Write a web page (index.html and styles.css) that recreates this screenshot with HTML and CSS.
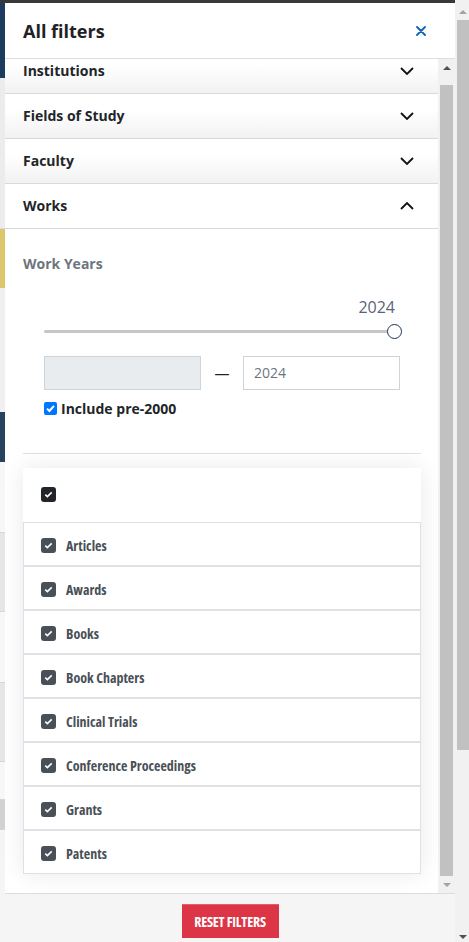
FILE: index.html
```html
<!DOCTYPE html>
<html lang="en">
<head>
<meta charset="utf-8">
<title>All filters</title>
<link rel="stylesheet" href="styles.css">
</head>
<body>
<div class="page">
  <div class="pg-top"></div>
  <div class="pg-hero"></div>
  <div class="pg-band"></div>
  <div class="pg-gold"></div>
  <div class="pg-light"></div>
  <div class="pg-navy"></div>
  <div class="pg-row"></div>
  <div class="pg-row alt"></div>
  <div class="pg-row"></div>
  <div class="pg-row alt"></div>
  <div class="pg-row short"></div>
  <div class="pg-row dark"></div>
  <div class="pg-rest"></div>
</div>

<aside class="drawer">
  <header class="drawer-head">
    <h2 class="drawer-title">All filters</h2>
    <button class="close-btn" aria-label="Close">
      <svg width="10" height="10" viewBox="0 0 10 10"><path d="M1 1L9 9M9 1L1 9" stroke="#0b63b6" stroke-width="1.8" stroke-linecap="round"/></svg>
    </button>
  </header>

  <div class="drawer-body">
    <div class="scroll-area">
      <div class="scroll-content">
        <div class="acc-row"><span>Institutions</span><svg class="chev" width="14" height="8" viewBox="0 0 14 8"><path d="M1 1L7 7L13 1" fill="none" stroke="#111" stroke-width="1.8"/></svg></div>
        <div class="acc-row"><span>Fields of Study</span><svg class="chev" width="14" height="8" viewBox="0 0 14 8"><path d="M1 1L7 7L13 1" fill="none" stroke="#111" stroke-width="1.8"/></svg></div>
        <div class="acc-row"><span>Faculty</span><svg class="chev" width="14" height="8" viewBox="0 0 14 8"><path d="M1 1L7 7L13 1" fill="none" stroke="#111" stroke-width="1.8"/></svg></div>
        <div class="acc-row open"><span>Works</span><svg class="chev" width="14" height="8" viewBox="0 0 14 8"><path d="M1 7L7 1L13 7" fill="none" stroke="#111" stroke-width="1.8"/></svg></div>

        <div class="works-body">
          <div class="sub-title">Work Years</div>
          <div class="range">
            <div class="range-value">2024</div>
            <div class="slider">
              <div class="slider-track"></div>
              <div class="slider-thumb"></div>
            </div>
            <div class="range-inputs">
              <div class="year-input disabled"></div>
              <span class="dash">—</span>
              <div class="year-input">2024</div>
            </div>
            <label class="pre-row">
              <svg width="13" height="13" viewBox="0 0 13 13"><rect width="13" height="13" rx="2" fill="#0075ff"/><path d="M3 6.6L5.4 9L10 3.8" fill="none" stroke="#fff" stroke-width="2"/></svg>
              <span>Include pre-2000</span>
            </label>
          </div>
          <hr class="sep">
          <div class="type-card">
            <div class="type-head">
              <svg width="15" height="15" viewBox="0 0 15 15"><rect width="15" height="15" rx="3" fill="#212529"/><path d="M4.3 7.6L6.4 9.6L10.7 5.4" fill="none" stroke="#fff" stroke-width="1.6"/></svg>
            </div>
            <div class="type-item"><svg width="15" height="15" viewBox="0 0 15 15"><rect width="15" height="15" rx="3" fill="#495057"/><path d="M4.3 7.6L6.4 9.6L10.7 5.4" fill="none" stroke="#fff" stroke-width="1.6"/></svg><span>Articles</span></div>
            <div class="type-item"><svg width="15" height="15" viewBox="0 0 15 15"><rect width="15" height="15" rx="3" fill="#495057"/><path d="M4.3 7.6L6.4 9.6L10.7 5.4" fill="none" stroke="#fff" stroke-width="1.6"/></svg><span>Awards</span></div>
            <div class="type-item"><svg width="15" height="15" viewBox="0 0 15 15"><rect width="15" height="15" rx="3" fill="#495057"/><path d="M4.3 7.6L6.4 9.6L10.7 5.4" fill="none" stroke="#fff" stroke-width="1.6"/></svg><span>Books</span></div>
            <div class="type-item"><svg width="15" height="15" viewBox="0 0 15 15"><rect width="15" height="15" rx="3" fill="#495057"/><path d="M4.3 7.6L6.4 9.6L10.7 5.4" fill="none" stroke="#fff" stroke-width="1.6"/></svg><span>Book Chapters</span></div>
            <div class="type-item"><svg width="15" height="15" viewBox="0 0 15 15"><rect width="15" height="15" rx="3" fill="#495057"/><path d="M4.3 7.6L6.4 9.6L10.7 5.4" fill="none" stroke="#fff" stroke-width="1.6"/></svg><span>Clinical Trials</span></div>
            <div class="type-item"><svg width="15" height="15" viewBox="0 0 15 15"><rect width="15" height="15" rx="3" fill="#495057"/><path d="M4.3 7.6L6.4 9.6L10.7 5.4" fill="none" stroke="#fff" stroke-width="1.6"/></svg><span>Conference Proceedings</span></div>
            <div class="type-item"><svg width="15" height="15" viewBox="0 0 15 15"><rect width="15" height="15" rx="3" fill="#495057"/><path d="M4.3 7.6L6.4 9.6L10.7 5.4" fill="none" stroke="#fff" stroke-width="1.6"/></svg><span>Grants</span></div>
            <div class="type-item"><svg width="15" height="15" viewBox="0 0 15 15"><rect width="15" height="15" rx="3" fill="#495057"/><path d="M4.3 7.6L6.4 9.6L10.7 5.4" fill="none" stroke="#fff" stroke-width="1.6"/></svg><span>Patents</span></div>
          </div>
        </div>
      </div>
    </div>
    <div class="inner-scrollbar">
      <div class="sb-btn"><span class="tri-up dark"></span></div>
      <div class="sb-thumb inner"></div>
      <div class="sb-btn bottom"><span class="tri-down light"></span></div>
    </div>
  </div>

  <footer class="drawer-foot">
    <button class="reset-btn">RESET FILTERS</button>
  </footer>
</aside>

<div class="outer-scrollbar">
  <div class="osb-up"><span class="tri-up light"></span></div>
  <div class="sb-thumb outer"></div>
  <div class="osb-fill"></div>
  <div class="osb-down"><span class="tri-down dark"></span></div>
</div>
</body>
</html>
```

FILE: styles.css
```css
* { box-sizing: border-box; margin: 0; padding: 0; }
html, body { height: 100%; }
body {
  overflow: hidden;
  background: #f3f3f3;
  font-family: "Open Sans", "Liberation Sans", sans-serif;
  color: #212529;
}

/* background page strip */
.page { width: 455px; }
.pg-top { height: 3px; background: #383838; }
.pg-hero { height: 75px; background: #1d3b5e; }
.pg-band { height: 151px; background: #ececec; border-bottom: 1px solid #dcdcdc; }
.pg-gold { height: 59px; background: #dbc66c; }
.pg-light { height: 124px; background: #f0f0f0; }
.pg-navy { height: 50px; background: #27425f; }
.pg-row { height: 71px; background: #f7f7f7; border-bottom: 1px solid #d6d6d6; }
.pg-row.alt { height: 79px; background: #e6e6e6; }
.pg-row.short { height: 38px; }
.pg-row.dark { height: 30px; background: #d2d2d2; }
.pg-rest { height: 300px; background: #f5f5f5; }

/* drawer */
.drawer {
  position: fixed;
  left: 5px;
  top: 3px;
  bottom: 0;
  width: 450px;
  background: #fff;
  display: flex;
  flex-direction: column;
}
.drawer-head {
  flex: none;
  height: 56px;
  border-bottom: 1px solid #dedede;
  display: flex;
  align-items: center;
  justify-content: space-between;
  padding: 0 29px 0 18px;
}
.drawer-title {
  font-size: 18px;
  font-weight: 700;
  color: #1e2125;
  line-height: 24px;
}
.close-btn {
  background: none;
  border: 0;
  width: 10px;
  height: 10px;
  display: flex;
}

.drawer-body {
  flex: 1;
  min-height: 0;
  display: flex;
}
.scroll-area {
  flex: 1;
  overflow: hidden;
}
.scroll-content { margin-top: -10px; }

.acc-row {
  height: 45px;
  border-bottom: 1px solid #d9d9d9;
  background: linear-gradient(#fff 35%, #f2f2f2);
  display: flex;
  align-items: center;
  justify-content: space-between;
  padding: 0 24px 2px 18px;
  font-size: 14px;
  font-weight: 700;
  color: #212529;
}
.acc-row .chev { margin-top: 2px; }
.acc-row.open { background: #fff; }

.works-body { padding: 24px 17px 30px 18px; }
.sub-title {
  font-size: 14px;
  font-weight: 700;
  line-height: 22px;
  color: #6c757d;
}
.range { margin: 0 21px; }
.range-value {
  margin-top: 21px;
  line-height: 22px;
  font-size: 16px;
  color: #5a6478;
  text-align: right;
  padding-right: 5px;
}
.slider {
  position: relative;
  height: 16px;
  margin: 5px 5px 0 0;
  display: flex;
  align-items: center;
}
.slider-track {
  width: 100%;
  height: 3px;
  background: #c9c5c5;
  border-radius: 2px;
}
.slider-thumb {
  position: absolute;
  right: -7px;
  top: 1px;
  width: 15px;
  height: 15px;
  border-radius: 50%;
  background: #fff;
  border: 1.5px solid #1c3454;
}
.range-inputs {
  margin-top: 17px;
  display: flex;
  align-items: center;
}
.year-input {
  width: 157px;
  height: 34px;
  border: 1px solid #ced4da;
  background: #fff;
  font-size: 14px;
  color: #6c757d;
  line-height: 32px;
  padding-left: 10px;
}
.year-input.disabled { background: #e9ecef; }
.dash {
  flex: 1;
  text-align: center;
  font-size: 15px;
  color: #212529;
}
.pre-row {
  margin-top: 8px;
  display: flex;
  align-items: center;
  gap: 4px;
  height: 20px;
  font-size: 14px;
  font-weight: 700;
  color: #212529;
}

.sep {
  border: 0;
  border-top: 1px solid #dee2e6;
  margin-top: 35px;
}

.type-card {
  margin-top: 14px;
  background: #fff;
  box-shadow: 0 0 22px rgba(0, 0, 0, 0.09);
}
.type-head {
  height: 54px;
  padding: 19px 0 0 18px;
  display: flex;
  align-items: flex-start;
}
.type-item {
  height: 44px;
  border: 1px solid #dee2e6;
  display: flex;
  align-items: center;
  gap: 10px;
  padding: 2px 0 0 17px;
  font-size: 14px;
  font-weight: 700;
  font-stretch: 75%;
  color: #495057;
}
.type-item svg, .type-head svg { flex: none; }

/* scrollbars */
.inner-scrollbar {
  flex: none;
  width: 17px;
  background: #f1f1f1;
  display: flex;
  flex-direction: column;
}
.sb-btn {
  height: 17px;
  display: flex;
  align-items: center;
  justify-content: center;
}
.sb-thumb { background: #c1c1c1; }
.sb-thumb.inner { height: 791px; margin: 9px 2px 0 2px; }
.outer-scrollbar {
  position: fixed;
  top: 0;
  right: 0;
  width: 14px;
  height: 942px;
  background: #f1f1f1;
  display: flex;
  flex-direction: column;
}
.osb-up {
  height: 20px;
  display: flex;
  align-items: center;
  justify-content: center;
  padding: 3px 0 0 1px;
}
.sb-thumb.outer { height: 730px; margin-left: 2px; }
.osb-fill { flex: 1; }
.osb-down {
  height: 10px;
  display: flex;
  align-items: center;
  justify-content: center;
  padding-left: 1px;
}
.tri-up, .tri-down {
  width: 0;
  height: 0;
  border-left: 4px solid transparent;
  border-right: 4px solid transparent;
}
.tri-up { border-bottom: 4px solid #505050; }
.tri-down { border-top: 4px solid #505050; }
.tri-up.light { border-bottom-color: #a3a3a3; }
.tri-down.light { border-top-color: #a3a3a3; }

/* footer */
.drawer-foot {
  flex: none;
  height: 49px;
  border-top: 1px solid #dcdcdc;
  background: #f5f5f5;
  display: flex;
  justify-content: center;
  padding-top: 10px;
}
.reset-btn {
  width: 97px;
  height: 34px;
  border: 0;
  border-top: 1px solid #e35d6a;
  background: #dc3545;
  color: #fff;
  font-family: "Open Sans", "Liberation Sans", sans-serif;
  font-size: 14px;
  font-weight: 700;
  font-stretch: 75%;
  letter-spacing: -0.2px;
}
```
